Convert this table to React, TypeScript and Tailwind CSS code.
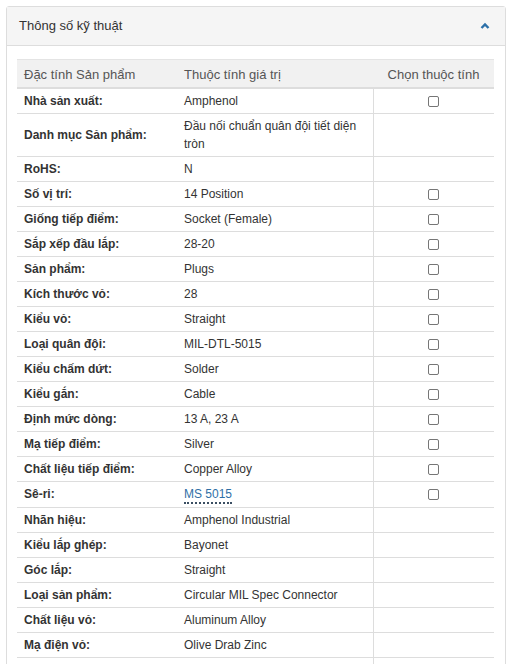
import React from 'react';

type Row = {
  label: string;
  value: string;
  check?: boolean;
  link?: boolean;
};

const ROWS: Row[] = [
  { label: 'Nhà sản xuất:', value: 'Amphenol', check: true },
  { label: 'Danh mục Sản phẩm:', value: 'Đầu nối chuẩn quân đội tiết diện tròn' },
  { label: 'RoHS:', value: 'N' },
  { label: 'Số vị trí:', value: '14 Position', check: true },
  { label: 'Giống tiếp điểm:', value: 'Socket (Female)', check: true },
  { label: 'Sắp xếp đầu lắp:', value: '28-20', check: true },
  { label: 'Sản phẩm:', value: 'Plugs', check: true },
  { label: 'Kích thước vỏ:', value: '28', check: true },
  { label: 'Kiểu vỏ:', value: 'Straight', check: true },
  { label: 'Loại quân đội:', value: 'MIL-DTL-5015', check: true },
  { label: 'Kiểu chấm dứt:', value: 'Solder', check: true },
  { label: 'Kiểu gắn:', value: 'Cable', check: true },
  { label: 'Định mức dòng:', value: '13 A, 23 A', check: true },
  { label: 'Mạ tiếp điểm:', value: 'Silver', check: true },
  { label: 'Chất liệu tiếp điểm:', value: 'Copper Alloy', check: true },
  { label: 'Sê-ri:', value: 'MS 5015', check: true, link: true },
  { label: 'Nhãn hiệu:', value: 'Amphenol Industrial' },
  { label: 'Kiểu lắp ghép:', value: 'Bayonet' },
  { label: 'Góc lắp:', value: 'Straight' },
  { label: 'Loại sản phẩm:', value: 'Circular MIL Spec Connector' },
  { label: 'Chất liệu vỏ:', value: 'Aluminum Alloy' },
  { label: 'Mạ điện vỏ:', value: 'Olive Drab Zinc' },
  { label: 'Nhiệt độ làm việc tối đa:', value: '+ 125 C' },
  { label: 'Nhiệt độ làm việc tối thiểu:', value: '- 55 C' },
];

function Checkbox() {
  return (
    <input
      type="checkbox"
      className="appearance-none w-[11px] h-[11px] border border-[#767676] rounded-[2px] bg-white align-middle m-0"
    />
  );
}

export default function App() {
  return (
    <div className="bg-white min-h-screen pt-[6px] px-[6px] font-['Liberation_Sans',Arial,sans-serif] text-[#333]">
      <div className="w-[500px] border border-[#ddd] rounded-[3px]">
        <div className="flex items-center justify-between h-[39px] px-[12px] bg-[#f5f5f5] border-b border-[#ddd]">
          <span className="text-[13px]">Thông số kỹ thuật</span>
          <svg width="10" height="8" viewBox="0 0 10 8" className="mr-[3px]">
            <polyline points="1.5,6 5,2.5 8.5,6" fill="none" stroke="#2a6fa8" strokeWidth="2.4" />
          </svg>
        </div>
        <div className="px-[10px] pt-[13px] pb-[10px]">
          <table className="w-[477px] table-fixed border-collapse text-[12px]">
            <colgroup>
              <col className="w-[159px]" />
              <col className="w-[197px]" />
              <col className="w-[121px]" />
            </colgroup>
            <thead>
              <tr className="bg-[#f1f1f1] border-t border-[#e4e4e4] border-b-2 border-b-[#ddd] text-[#555] text-[13px]">
                <th className="h-[28px] pt-[2px] px-[7px] text-left font-normal">Đặc tính Sản phẩm</th>
                <th className="pt-[2px] px-[8px] text-left font-normal">Thuộc tính giá trị</th>
                <th className="pt-[2px] px-[4px] text-center font-normal">Chọn thuộc tính</th>
              </tr>
            </thead>
            <tbody>
              {ROWS.map(r => (
                <tr key={r.label} className="border-b border-[#ddd]">
                  <td className="px-[7px] py-[3px] leading-[18px] font-bold align-middle">{r.label}</td>
                  <td className="px-[8px] py-[3px] leading-[18px] align-middle">
                    {r.link ? (
                      <span className="text-[#2f6fa6] border-b-2 border-dotted border-[#3b4f63] leading-[15px] inline-block">
                        {r.value}
                      </span>
                    ) : (
                      r.value
                    )}
                  </td>
                  <td className="border-l border-[#ddd] text-center align-middle leading-[18px]">
                    {r.check && <Checkbox />}
                  </td>
                </tr>
              ))}
            </tbody>
          </table>
        </div>
      </div>
    </div>
  );
}
